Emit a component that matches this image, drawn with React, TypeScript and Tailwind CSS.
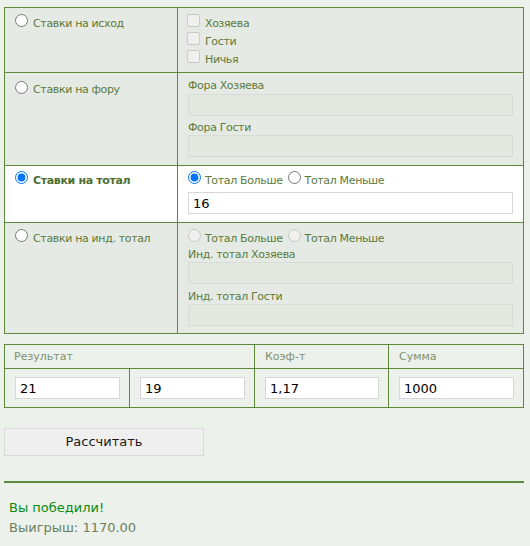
import React from 'react'

const labelColor = 'text-[#5b7a3c]'

const Radio = ({ checked = false, disabled = false, name }: { checked?: boolean; disabled?: boolean; name: string }) => (
  <input type="radio" name={name} defaultChecked={checked} disabled={disabled} className="block m-0 w-[13px] h-[13px] shrink-0" />
)

const Check = () => (
  <input type="checkbox" disabled className="block m-0 w-[13px] h-[13px] shrink-0" />
)

const Field = ({ value, disabled = false }: { value?: string; disabled?: boolean }) => (
  <input
    type="text"
    defaultValue={value}
    disabled={disabled}
    className={
      'block w-full h-[22px] px-[4px] text-[13px] text-black outline-none border ' +
      (disabled ? 'bg-[#e3e8e1] border-[#d8dcd6]' : 'bg-white border-[#d6d6d6]')
    }
  />
)

// text line that sits beside a radio / checkbox
const Txt = ({ children, className = '' }: { children: React.ReactNode; className?: string }) => (
  <span className={'block leading-[14px] tracking-[-0.35px] ' + className}>{children}</span>
)

const TotalChoice = ({ name, disabled = false, checked = false }: { name: string; disabled?: boolean; checked?: boolean }) => (
  <div className="flex items-start h-[16px]">
    <Radio name={name} checked={checked} disabled={disabled} />
    <Txt className={'mt-[3px] ml-[4px] ' + labelColor}>Тотал Больше</Txt>
    <div className="ml-[5px]"><Radio name={name} disabled={disabled} /></div>
    <Txt className={'mt-[3px] ml-[4px] ' + labelColor}>Тотал Меньше</Txt>
  </div>
)

const App = () => {
  return (
    <div className="min-h-[546px] bg-[#ecf1eb] pl-[4px] pt-[7px] text-[11px]" style={{ fontFamily: '"DejaVu Sans", Verdana, sans-serif' }}>
      {/* bet types */}
      <div className="w-[520px] border border-[#5b8a3c] grid grid-cols-[173px_1fr]">
        {/* outcome */}
        <div className="h-[65px] border-r border-b border-[#5b8a3c] bg-[#e5eae4] pl-[10px] pt-[6px]">
          <label className="flex items-start gap-[5px]">
            <Radio name="bet" />
            <Txt className={'mt-[3px] ' + labelColor}>Ставки на исход</Txt>
          </label>
        </div>
        <div className="h-[65px] border-b border-[#5b8a3c] bg-[#e5eae4] pl-[9px] pt-[6px]">
          {['Хозяева', 'Гости', 'Ничья'].map((t) => (
            <label key={t} className="flex items-start gap-[5px] h-[18px]">
              <Check />
              <Txt className={'mt-[3px] ' + labelColor}>{t}</Txt>
            </label>
          ))}
        </div>

        {/* handicap */}
        <div className="h-[93px] border-r border-b border-[#5b8a3c] bg-[#e5eae4] pl-[10px] pt-[8px]">
          <label className="flex items-start gap-[5px]">
            <Radio name="bet" />
            <Txt className={'mt-[2px] ' + labelColor}>Ставки на фору</Txt>
          </label>
        </div>
        <div className="h-[93px] border-b border-[#5b8a3c] bg-[#e5eae4] px-[10px] pt-[6px]">
          <div className={'leading-[14px] tracking-[-0.35px] mb-[1px] ' + labelColor}>Фора Хозяева</div>
          <Field disabled />
          <div className={'leading-[14px] tracking-[-0.35px] mt-[5px] ' + labelColor}>Фора Гости</div>
          <Field disabled />
        </div>

        {/* total */}
        <div className="h-[57px] border-r border-b border-[#5b8a3c] bg-white pl-[10px] pt-[5px]">
          <label className="flex items-start gap-[5px]">
            <Radio name="bet" checked />
            <Txt className="mt-[3px] font-bold text-[#4d6e33]">Ставки на тотал</Txt>
          </label>
        </div>
        <div className="h-[57px] border-b border-[#5b8a3c] bg-white px-[10px] pt-[5px]">
          <TotalChoice name="total" checked />
          <div className="mt-[5px]">
            <Field value="16" />
          </div>
        </div>

        {/* individual total */}
        <div className="h-[110px] border-r border-[#5b8a3c] bg-[#e5eae4] pl-[10px] pt-[6px]">
          <label className="flex items-start gap-[5px]">
            <Radio name="bet" />
            <Txt className={'mt-[3px] ' + labelColor}>Ставки на инд. тотал</Txt>
          </label>
        </div>
        <div className="h-[110px] bg-[#e5eae4] px-[10px] pt-[6px]">
          <TotalChoice name="itotal" disabled />
          <div className={'leading-[14px] tracking-[-0.35px] mt-[3px] ' + labelColor}>Инд. тотал Хозяева</div>
          <Field disabled />
          <div className={'leading-[14px] tracking-[-0.35px] mt-[6px] ' + labelColor}>Инд. тотал Гости</div>
          <Field disabled />
        </div>
      </div>

      {/* result */}
      <div className="mt-[10px] w-[520px] border border-[#5b8a3c] grid grid-cols-[125px_125px_134px_1fr] text-[#7e9270]">
        <div className="col-span-2 h-[24px] border-r border-b border-[#5b8a3c] pl-[9px] pt-[2px] flex items-center">Результат</div>
        <div className="h-[24px] border-r border-b border-[#5b8a3c] pl-[10px] pt-[2px] flex items-center">Коэф-т</div>
        <div className="h-[24px] border-b border-[#5b8a3c] pl-[10px] pt-[2px] flex items-center">Сумма</div>

        <div className="h-[38px] border-r border-[#5b8a3c] pl-[10px] pr-[9px] pt-[8px]"><Field value="21" /></div>
        <div className="h-[38px] border-r border-[#5b8a3c] pl-[10px] pr-[9px] pt-[8px]"><Field value="19" /></div>
        <div className="h-[38px] border-r border-[#5b8a3c] pl-[10px] pr-[9px] pt-[8px]"><Field value="1,17" /></div>
        <div className="h-[38px] pl-[10px] pr-[9px] pt-[8px]"><Field value="1000" /></div>
      </div>

      <button className="block mt-[20px] w-[200px] h-[28px] bg-[#efefef] border border-[#dadada] text-[13px] text-[#1a1a1a]">
        Рассчитать
      </button>

      <div className="mt-[25px] w-[520px] h-[2px] bg-[#5b8a3c]" />

      <div className="pl-[5px] pt-[15px] text-[13px] leading-[20px]">
        <div className="text-[#0b8a0b]">Вы победили!</div>
        <div className="text-[#6b8060]">Выигрыш: 1170.00</div>
      </div>
    </div>
  )
}

export default App
